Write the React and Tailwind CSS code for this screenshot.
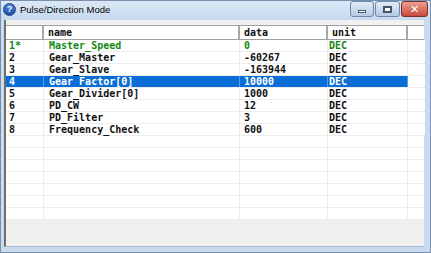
import React from "react";

const rows = [
  { no: "1*", name: "Master_Speed", data: "0", unit: "DEC", green: true },
  { no: "2", name: "Gear_Master", data: "-60267", unit: "DEC" },
  { no: "3", name: "Gear_Slave", data: "-163944", unit: "DEC" },
  { no: "4", name: "Gear_Factor[0]", data: "10000", unit: "DEC", selected: true },
  { no: "5", name: "Gear_Divider[0]", data: "1000", unit: "DEC" },
  { no: "6", name: "PD_CW", data: "12", unit: "DEC" },
  { no: "7", name: "PD_Filter", data: "3", unit: "DEC" },
  { no: "8", name: "Frequency_Check", data: "600", unit: "DEC" },
];

const empties = Array.from({ length: 7 });

const mono = { fontFamily: '"DejaVu Sans Mono", "Liberation Mono", monospace' };

const TitleButtons = () => (
  <div className="flex items-start gap-[1px] mr-[2px]">
    <div className="w-[24px] h-[16px] rounded-[3px] border border-[#6d88ac] bg-gradient-to-b from-[#e3ecf7] to-[#b6cae3] flex items-center justify-center">
      <div className="w-[8px] h-[3px] bg-white border border-[#44546a] mt-[4px]" />
    </div>
    <div className="w-[25px] h-[16px] rounded-[3px] border border-[#6d88ac] bg-gradient-to-b from-[#e3ecf7] to-[#b6cae3] flex items-center justify-center">
      <div className="w-[9px] h-[7px] border-[2px] border-[#44546a] bg-white" />
    </div>
    <div className="w-[27px] h-[16px] rounded-[3px] border border-[#7a2f2a] bg-gradient-to-b from-[#e8a093] to-[#c7473a] flex items-center justify-center">
      <span className="text-white text-[11px] font-bold leading-none" style={{ fontFamily: '"DejaVu Sans", sans-serif' }}>
        ✕
      </span>
    </div>
  </div>
);

const Row = ({ r }) => {
  const color = r.selected ? "text-white" : r.green ? "text-[#128a12]" : "text-[#111]";
  const bg = r.selected ? "bg-[#0a6ed6]" : "bg-white";
  const line = r.selected ? "border-[#5b9be3]" : "border-[#ececec]";
  return (
    <div className="grid grid-cols-[38px_196px_88px_80px_17px] h-[12px] border-b border-[#ececec] text-[10px] font-bold leading-[11px]" style={mono}>
      <div className={`${bg} ${color} ${line} border-r pl-[3px]`}>{r.no}</div>
      <div className={`${bg} ${color} ${line} border-r pl-[5px]`}>{r.name}</div>
      <div className={`${bg} ${color} ${line} border-r pl-[4px]`}>{r.data}</div>
      <div className={`${bg} ${color} ${line} border-r pl-[1px]`}>{r.unit}</div>
      <div className="bg-white" />
    </div>
  );
};

export default function App() {
  return (
    <div className="w-[431px] h-[253px] bg-[#c9dbef] border border-[#7891ae] flex flex-col overflow-hidden">
      <div className="h-[19px] flex items-start justify-between bg-gradient-to-b from-[#dce8f6] to-[#c6d9ee]">
        <div className="flex items-center gap-[4px] pl-[2px] pt-[2px]">
          <div className="w-[13px] h-[13px] rounded-full bg-gradient-to-b from-[#4f86d8] to-[#1a4fa8] border border-[#1c3f7d] flex items-center justify-center">
            <span className="text-white text-[9px] font-bold leading-none" style={{ fontFamily: '"Liberation Sans", sans-serif' }}>?</span>
          </div>
          <span className="text-[9.5px] text-black leading-none" style={{ fontFamily: '"Liberation Sans", Arial, sans-serif' }}>
            Pulse/Direction Mode
          </span>
        </div>
        <TitleButtons />
      </div>
      <div className="flex-1 ml-[3px] mr-[6px] mb-[5px] bg-[#f0f0f0] border-l-2 border-[#6e6e6e] border-b border-b-[#a7bcd4] flex flex-col pt-[5px]">
        <div className="bg-white">
          <div className="grid grid-cols-[38px_196px_88px_80px_17px] h-[15px] border-t border-b border-[#a0a0a0] text-[10px] font-bold leading-[13px] text-[#111]" style={mono}>
            <div className="border-r-2 border-[#a8a8a8]" />
            <div className="border-r-2 border-[#a8a8a8] pl-[4px]">name</div>
            <div className="border-r-2 border-[#a8a8a8] pl-[4px]">data</div>
            <div className="border-r-2 border-[#a8a8a8] pl-[4px]">unit</div>
            <div />
          </div>
          {rows.map((r) => (
            <Row key={r.no} r={r} />
          ))}
          {empties.map((_, i) => (
            <div key={i} className="grid grid-cols-[38px_196px_88px_80px_17px] h-[12px] border-b border-[#ececec]">
              <div className="border-r border-[#ececec]" />
              <div className="border-r border-[#ececec]" />
              <div className="border-r border-[#ececec]" />
              <div className="border-r border-[#ececec]" />
              <div />
            </div>
          ))}
        </div>
      </div>
    </div>
  );
}
